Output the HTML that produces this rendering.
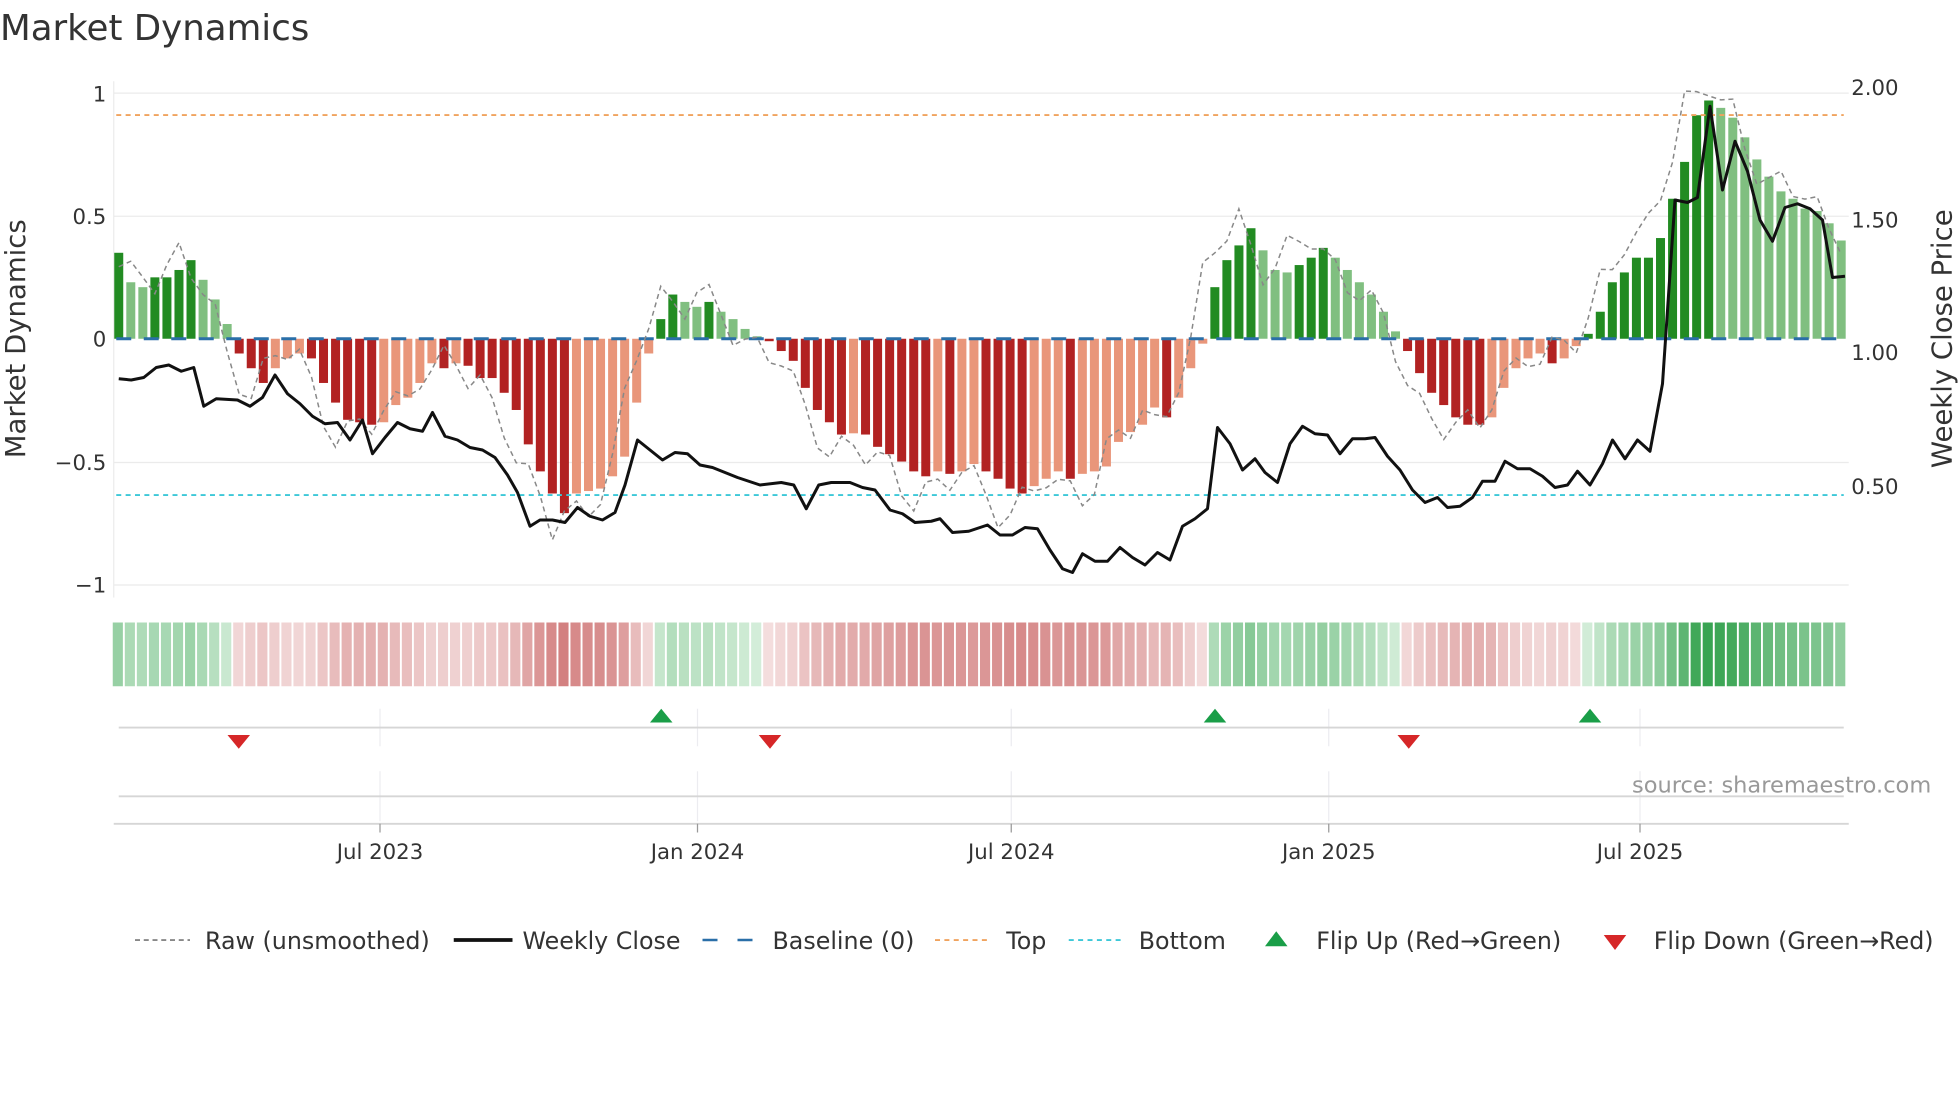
<!DOCTYPE html>
<html><head><meta charset="utf-8"><style>
html,body{margin:0;padding:0;background:#fff;width:1960px;height:1102px;overflow:hidden}
svg{display:block}
text{font-family:"DejaVu Sans","Liberation Sans",sans-serif;fill:#333}
</style></head><body>
<svg id="s" width="1960" height="1102" viewBox="0 0 1568 881.6" xmlns="http://www.w3.org/2000/svg">
<text x="0" y="32" font-size="28.5">Market Dynamics</text>
<g stroke="#ebebeb" stroke-width="1">
<line x1="91" y1="74.5" x2="1479" y2="74.5"/><line x1="91" y1="173" x2="1479" y2="173"/>
<line x1="91" y1="370" x2="1479" y2="370"/><line x1="91" y1="468" x2="1479" y2="468"/>
<line x1="91" y1="65" x2="91" y2="478"/>
</g>
<g font-size="17" text-anchor="end">
<text x="85" y="81">1</text><text x="85" y="179">0.5</text><text x="85" y="277">0</text>
<text x="85" y="376">−0.5</text><text x="85" y="474">−1</text>
</g>
<g font-size="17">
<text x="1481" y="76">2.00</text><text x="1481" y="182">1.50</text><text x="1481" y="288">1.00</text><text x="1481" y="395">0.50</text>
</g>
<text transform="translate(20,271) rotate(-90)" font-size="22" text-anchor="middle">Market Dynamics</text>
<text transform="translate(1561,271) rotate(-90)" font-size="22" text-anchor="middle">Weekly Close Price</text>
<g id="bars"></g>
<line x1="93" y1="92" x2="1475" y2="92" stroke="#f0a35e" stroke-width="1.5" stroke-dasharray="4,3.5"/>
<line x1="93" y1="396" x2="1475" y2="396" stroke="#3cc8d8" stroke-width="1.5" stroke-dasharray="4,3.5"/>
<line x1="93" y1="271" x2="1475" y2="271" stroke="#2a6fa8" stroke-width="2.4" stroke-dasharray="12,10"/>
<polyline id="raw" fill="none" stroke="#888" stroke-width="1.2" stroke-dasharray="4,3"/>
<polyline id="close" fill="none" stroke="#111" stroke-width="2.4" stroke-linejoin="round"/>
<g id="heat"></g>
<g stroke="#ececf0" stroke-width="1">
<line x1="304" y1="567" x2="304" y2="597"/><line x1="558" y1="567" x2="558" y2="597"/><line x1="809" y1="567" x2="809" y2="597"/><line x1="1063" y1="567" x2="1063" y2="597"/><line x1="1312" y1="567" x2="1312" y2="597"/>
<line x1="304" y1="617" x2="304" y2="657"/><line x1="558" y1="617" x2="558" y2="657"/><line x1="809" y1="617" x2="809" y2="657"/><line x1="1063" y1="617" x2="1063" y2="657"/><line x1="1312" y1="617" x2="1312" y2="657"/>
</g>
<g stroke="#d6d6d6" stroke-width="1.5">
<line x1="95" y1="582" x2="1475" y2="582"/><line x1="95" y1="637" x2="1475" y2="637"/><line x1="91" y1="659" x2="1479" y2="659"/>
</g>
<g stroke="#999" stroke-width="1">
<line x1="304" y1="659" x2="304" y2="666"/><line x1="558" y1="659" x2="558" y2="666"/><line x1="809" y1="659" x2="809" y2="666"/><line x1="1063" y1="659" x2="1063" y2="666"/><line x1="1312" y1="659" x2="1312" y2="666"/>
</g>
<g fill="#1a9e48">
<polygon points="520,578 538,578 529,567"/><polygon points="963,578 981,578 972,567"/><polygon points="1263,578 1281,578 1272,567"/>
</g>
<g fill="#d62728">
<polygon points="182,588 200,588 191,599"/><polygon points="607,588 625,588 616,599"/><polygon points="1118,588 1136,588 1127,599"/>
</g>
<text x="1545" y="634" font-size="18" text-anchor="end" style="fill:#999">source: sharemaestro.com</text>
<g font-size="17" text-anchor="middle">
<text x="304" y="687">Jul 2023</text><text x="558" y="687">Jan 2024</text><text x="809" y="687">Jul 2024</text><text x="1063" y="687">Jan 2025</text><text x="1312" y="687">Jul 2025</text>
</g>
<g font-size="19">
<line x1="108" y1="752" x2="152" y2="752" stroke="#888" stroke-width="1.5" stroke-dasharray="4,3"/>
<text x="164" y="759">Raw (unsmoothed)</text>
<line x1="363" y1="752" x2="410" y2="752" stroke="#111" stroke-width="3"/>
<text x="418" y="759">Weekly Close</text>
<line x1="562" y1="752" x2="606" y2="752" stroke="#2a6fa8" stroke-width="2" stroke-dasharray="12,16"/>
<text x="618" y="759">Baseline (0)</text>
<line x1="748" y1="752" x2="792" y2="752" stroke="#f0a35e" stroke-width="1.5" stroke-dasharray="4,3.5"/>
<text x="805" y="759">Top</text>
<line x1="855" y1="752" x2="899" y2="752" stroke="#3cc8d8" stroke-width="1.5" stroke-dasharray="4,3.5"/>
<text x="911" y="759">Bottom</text>
<polygon points="1012,757 1030,757 1021,745" fill="#1a9e48"/>
<text x="1053" y="759">Flip Up (Red→Green)</text>
<polygon points="1283,748 1301,748 1292,760" fill="#d62728"/>
<text x="1323" y="759">Flip Down (Green→Red)</text>
</g>
</svg>
<script>
var v=[0.35,0.23,0.21,0.25,0.25,0.28,0.32,0.24,0.16,0.06,
-0.06,-0.12,-0.18,-0.12,-0.08,-0.06,-0.08,-0.18,-0.26,-0.33,-0.34,-0.35,-0.34,-0.27,-0.24,-0.18,-0.1,-0.12,-0.1,-0.11,-0.16,-0.16,-0.22,-0.29,-0.43,-0.54,-0.63,-0.71,-0.63,-0.62,-0.61,-0.56,-0.48,-0.26,-0.06,
0.08,0.18,0.15,0.13,0.15,0.11,0.08,0.04,0.01,
-0.01,-0.05,-0.09,-0.2,-0.29,-0.34,-0.39,-0.385,-0.39,-0.44,-0.47,-0.5,-0.54,-0.56,-0.54,-0.55,-0.54,-0.51,-0.54,-0.57,-0.61,-0.63,-0.6,-0.57,-0.54,-0.57,-0.55,-0.54,-0.52,-0.42,-0.38,-0.35,-0.28,-0.32,-0.24,-0.12,-0.02,
0.21,0.32,0.38,0.45,0.36,0.28,0.27,0.30,0.33,0.37,0.33,0.28,0.23,0.18,0.11,0.03,
-0.05,-0.14,-0.22,-0.27,-0.32,-0.35,-0.35,-0.32,-0.2,-0.12,-0.08,-0.06,-0.1,-0.08,-0.03,
0.02,0.11,0.23,0.27,0.33,0.33,0.41,0.57,0.72,0.91,0.97,0.94,0.90,0.82,0.73,0.66,0.60,0.57,0.53,0.52,0.47,0.40];
var NS="http://www.w3.org/2000/svg";
function el(p,t,a){var e=document.createElementNS(NS,t);for(var k in a)e.setAttribute(k,a[k]);p.appendChild(e);return e;}
var bars=document.getElementById('bars'),heat=document.getElementById('heat');
var X=function(i){return 95+i*9.636;};
function mix(a,b,t){var r=[];for(var j=0;j<3;j++)r.push(Math.round(a[j]+(b[j]-a[j])*t));return 'rgb('+r.join(',')+')';}
for(var i=0;i<v.length;i++){
 var val=v[i],prev=i?v[i-1]:0;
 var dark=(i==0)||Math.abs(val)>=Math.abs(prev)||(val*prev<0);
 var col=val>=0?(dark?'#228b22':'#80bf80'):(dark?'#b22222':'#e9967a');
 var h=Math.abs(val)*196.5,y=val>=0?271-h:271;
 el(bars,'rect',{x:X(i)-3.6,y:y,width:7.2,height:Math.max(h,0.8),fill:col});
 var t=Math.min(1,Math.abs(val));
 var hc=val>=0?mix([214,238,219],[52,162,78],Math.pow(t,0.9)):mix([244,222,222],[208,120,120],Math.min(1,t*1.3));
 el(heat,'rect',{x:X(i)-4.8,y:498,width:8.1,height:51,fill:hc});
}
var rp=[];
for(var i=0;i<v.length;i++){
 var n=v[Math.min(v.length-1,i+1)];
 var r=n*1.1+0.06*Math.sin(i*1.7)+0.04*Math.cos(i*0.9);
 if(r>0.99)r=0.99-0.02*Math.sin(i);
 rp.push(X(i).toFixed(1)+','+(271-r*196.5).toFixed(1));
}
document.getElementById('raw').setAttribute('points',rp.join(' '));
var c=[95,303,105,304,115,302,125,294,135,292,145,297,155,294,163,325,173,319,190,320,200,325,210,318,220,300,230,315,240,323,250,333,260,339,270,338,280,352,290,336,298,363,308,350,318,338,328,343,338,345,346,330,356,349,366,352,376,358,386,360,396,366,406,380,414,394,424,421,432,416,442,416,452,418,462,406,472,413,482,416,492,410,500,388,510,352,520,360,530,368,540,362,550,363,560,372,570,374,590,382,608,388,625,386,635,388,645,407,655,388,665,386,680,386,690,390,700,392,712,408,722,411,732,418,745,417,752,415,762,426,775,425,790,420,800,428,810,428,820,422,830,423,840,440,850,455,858,458,866,443,876,449,886,449,896,438,906,446,916,452,926,442,936,448,946,421,956,415,966,407,974,342,984,355,994,376,1004,367,1012,378,1022,386,1032,355,1042,341,1052,347,1062,348,1072,363,1082,351,1092,351,1100,350,1110,365,1120,376,1130,392,1140,402,1150,398,1158,406,1168,405,1178,398,1186,385,1196,385,1204,369,1214,375,1224,375,1234,381,1244,390,1254,388,1262,377,1272,388,1282,371,1290,352,1300,367,1310,352,1320,361,1330,307,1340,160,1350,162,1358,158,1368,85,1378,152,1388,113,1398,137,1408,176,1418,193,1428,166,1438,163,1448,167,1458,176,1466,222,1476,221];
var cp=[];for(var i=0;i<c.length;i+=2)cp.push(c[i]+','+c[i+1]);
document.getElementById('close').setAttribute('points',cp.join(' '));
</script>
</body></html>
